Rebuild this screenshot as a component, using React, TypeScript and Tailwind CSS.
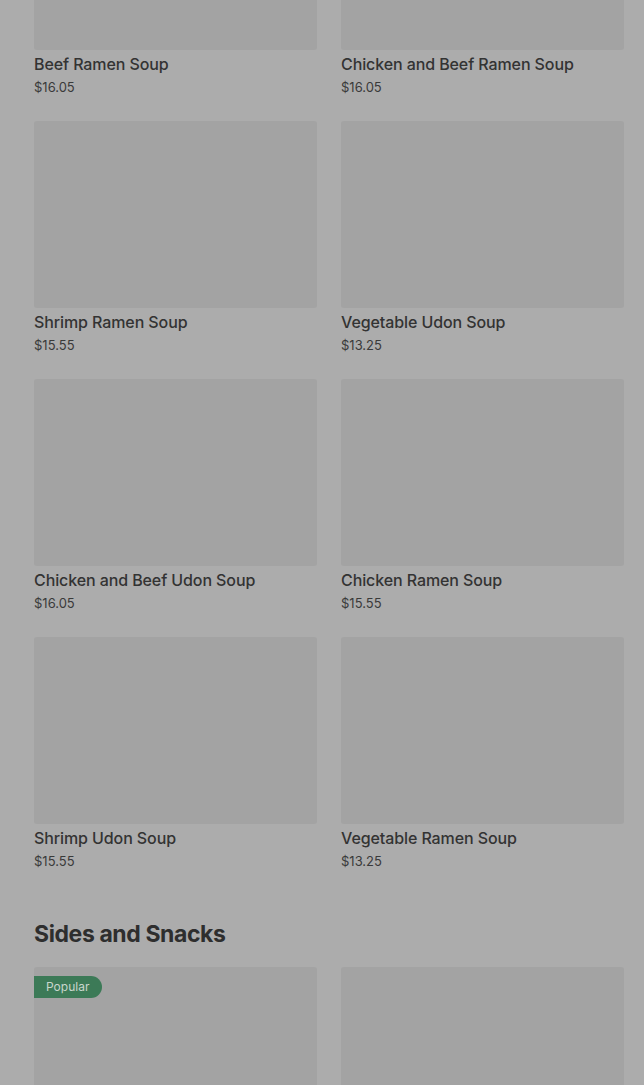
const soups = [
    { name: "Beef Ramen Soup", price: "$16.05" },
    { name: "Chicken and Beef Ramen Soup", price: "$16.05" },
    { name: "Shrimp Ramen Soup", price: "$15.55" },
    { name: "Vegetable Udon Soup", price: "$13.25" },
    { name: "Chicken and Beef Udon Soup", price: "$16.05" },
    { name: "Chicken Ramen Soup", price: "$15.55" },
    { name: "Shrimp Udon Soup", price: "$15.55" },
    { name: "Vegetable Ramen Soup", price: "$13.25" },
];

function Card({ name, price }: { name: string; price: string }) {
    return (
        <div className="flex flex-col">
            <div className="h-[187px] w-full rounded-[3px] bg-[#a3a3a3]"></div>
            <div className="mt-[2px] text-[16px] leading-[24px] font-medium tracking-[-0.1px] text-[#333333]">{name}</div>
            <div className="mt-[1px] text-[13px] leading-[20px] text-[#3a3a3a]">{price}</div>
        </div>
    );
}

export default function App() {
    return (
        <div className="h-[1085px] w-full overflow-hidden bg-[#acacac] font-['Inter','Liberation_Sans',sans-serif]">
            <div className="pl-[34px] pr-[20px] -mt-[137px]">
                <div className="grid grid-cols-2 gap-x-[24px] gap-y-[24px]">
                    {soups.map((s) => (
                        <Card key={s.name} name={s.name} price={s.price} />
                    ))}
                </div>
                <h2 className="mt-[47px] text-[23px] leading-[32px] font-bold tracking-[-0.4px] text-[#2e2e2e]">
                    Sides and Snacks
                </h2>
                <div className="mt-[17px] grid grid-cols-2 gap-x-[24px]">
                    <div className="relative h-[200px] rounded-[3px] bg-[#a3a3a3]">
                        <span className="absolute left-0 top-[9px] h-[22px] rounded-r-full bg-[#3c7a57] pl-[12px] pr-[13px] text-[12px] leading-[22px] text-[#c9d6cd]">
                            Popular
                        </span>
                    </div>
                    <div className="h-[200px] rounded-[3px] bg-[#a3a3a3]"></div>
                </div>
            </div>
        </div>
    );
}
